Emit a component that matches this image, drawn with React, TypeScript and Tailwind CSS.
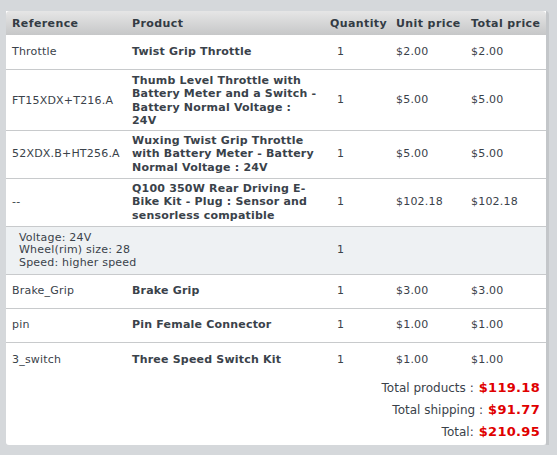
import React from "react";

type Item = { ref: string; name: string; qty: number; unit: string; total: string; attrs?: string[] };

const items: Item[] = [
  { ref: "Throttle", name: "Twist Grip Throttle", qty: 1, unit: "$2.00", total: "$2.00" },
  { ref: "FT15XDX+T216.A", name: "Thumb Level Throttle with Battery Meter and a Switch - Battery Normal Voltage : 24V", qty: 1, unit: "$5.00", total: "$5.00" },
  { ref: "52XDX.B+HT256.A", name: "Wuxing Twist Grip Throttle with Battery Meter - Battery Normal Voltage : 24V", qty: 1, unit: "$5.00", total: "$5.00" },
  {
    ref: "--",
    name: "Q100 350W Rear Driving E-Bike Kit - Plug : Sensor and sensorless compatible",
    qty: 1,
    unit: "$102.18",
    total: "$102.18",
    attrs: ["Voltage: 24V", "Wheel(rim) size: 28", "Speed: higher speed"],
  },
  { ref: "Brake_Grip", name: "Brake Grip", qty: 1, unit: "$3.00", total: "$3.00" },
  { ref: "pin", name: "Pin Female Connector", qty: 1, unit: "$1.00", total: "$1.00" },
  { ref: "3_switch", name: "Three Speed Switch Kit", qty: 1, unit: "$1.00", total: "$1.00" },
];

export default function App() {
  return (
    <div className="w-[557px] h-[455px] bg-[#d5d8db] pt-[11px] pl-[6px] text-[11px] text-[#3a424a] tracking-[0.2px]" style={{ fontFamily: '"DejaVu Sans", Verdana, sans-serif' }}>
      <div className="w-[543px] h-[434px] border-r-[3px] border-[#c3c6c9] rounded-tr-[4px]">
        <div className="w-[540px] h-[434px] bg-white rounded-b-[3px] flex flex-col">
          <table className="w-[540px] border-collapse table-fixed leading-[13.3px]">
            <colgroup>
              <col className="w-[120px]" />
              <col className="w-[198px]" />
              <col className="w-[66px]" />
              <col className="w-[75px]" />
              <col className="w-[81px]" />
            </colgroup>
            <thead>
              <tr className="h-[24px] bg-gradient-to-b from-[#e6e6e6] to-[#c6c7c8] text-[#333b44] text-left tracking-[0.4px]">
                <th className="pl-[6px] pt-[1px] font-bold rounded-tl-[4px]">Reference</th>
                <th className="pl-[6px] pt-[1px] font-bold">Product</th>
                <th className="pl-[6px] pt-[1px] font-bold">Quantity</th>
                <th className="pl-[6px] pt-[1px] font-bold">Unit price</th>
                <th className="pl-[6px] pt-[1px] font-bold rounded-tr-[4px]">Total price</th>
              </tr>
            </thead>
            <tbody>
              {items.map((it, i) => (
                <React.Fragment key={it.ref}>
                  <tr className={i < items.length - 1 || it.attrs ? "border-b border-[#c8cacc]" : ""}>
                    <td className={`pl-[6px] ${it.name.length > 30 ? "h-[48px]" : "h-[34px]"} ${i === 1 ? "h-[61px] pt-[2px]" : ""}`}>{it.ref}</td>
                    <td className={`pl-[6px] pr-[7px] font-bold ${i === 1 ? "pt-[2px]" : ""}`}>{it.name}</td>
                    <td className="pl-[13px]">{it.qty}</td>
                    <td className="pl-[6px]">{it.unit}</td>
                    <td className="pl-[6px]">{it.total}</td>
                  </tr>
                  {it.attrs && (
                    <tr className="bg-[#eef1f3] border-b border-[#c8cacc]">
                      <td colSpan={2} className="h-[48px] pl-[13px] leading-[12.5px] pt-[1px]">
                        {it.attrs.map((a) => (
                          <div key={a}>{a}</div>
                        ))}
                      </td>
                      <td className="pl-[13px]">1</td>
                      <td />
                      <td />
                    </tr>
                  )}
                </React.Fragment>
              ))}
            </tbody>
          </table>
          <div className="flex flex-col items-end pr-[6px] pt-[2px] text-[12px] gap-[3px] tracking-normal">
            <div className="h-[19px] flex items-center gap-[5px]">
              <span>Total products :</span>
              <span className="text-[13px] font-bold text-[#e00000] tracking-[0.3px]">$119.18</span>
            </div>
            <div className="h-[19px] flex items-center gap-[5px]">
              <span>Total shipping :</span>
              <span className="text-[13px] font-bold text-[#e00000] tracking-[0.3px]">$91.77</span>
            </div>
            <div className="h-[19px] flex items-center gap-[5px]">
              <span>Total:</span>
              <span className="text-[13px] font-bold text-[#e00000] tracking-[0.3px]">$210.95</span>
            </div>
          </div>
        </div>
      </div>
    </div>
  );
}
